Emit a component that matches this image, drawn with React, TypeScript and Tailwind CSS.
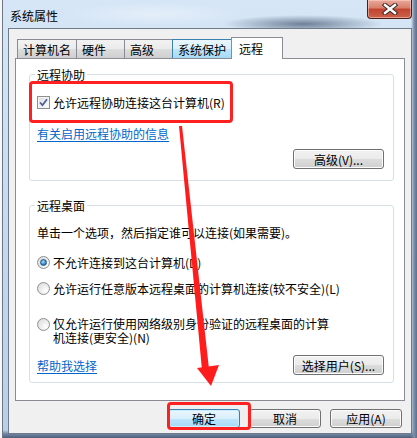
import React from 'react';

const btnGray =
  'bg-[linear-gradient(180deg,#f2f2f2_0%,#ebebeb_50%,#dddddd_50%,#cfcfcf_100%)] border-[#707070] shadow-[inset_0_0_0_1px_#fbfbfb]';
const btnBlue =
  'bg-[linear-gradient(180deg,#eaf6fd_0%,#d9f0fc_50%,#bee6fd_50%,#a7d9f5_100%)] border-[#3c7fb1] shadow-[inset_0_0_0_1px_#cdeefc]';

const Win7Button: React.FC<{ label: string; width: string; isDefault?: boolean; height?: string }> = ({
  label,
  width,
  isDefault,
  height = 'h-[20px]',
}) => (
  <button
    type="button"
    className={`${width} ${height} rounded-[3px] border flex items-center justify-center text-[12px] leading-[13px] ${
      isDefault ? btnBlue : btnGray
    }`}
  >
    {label}
  </button>
);

const Checkbox: React.FC = () => (
  <span className="w-[13px] h-[13px] shrink-0 border border-[#8e8f8f] bg-[linear-gradient(135deg,#dcdcdc,#ffffff)] flex items-center justify-center shadow-[inset_0_0_0_1px_#f4f4f4]">
    <svg width="9" height="9" viewBox="0 0 9 9">
      <path d="M1 4.5 L3.5 7.2 L8 1.2" fill="none" stroke="#4a5f97" strokeWidth="1.8" />
    </svg>
  </span>
);

const Radio: React.FC<{ checked?: boolean }> = ({ checked }) => (
  <span className="w-[13px] h-[13px] shrink-0 rounded-full border border-[#8e8f8f] bg-[radial-gradient(circle_at_70%_70%,#ffffff,#d6d6d6)] flex items-center justify-center">
    {checked && (
      <span className="w-[7px] h-[7px] rounded-full border border-[#1c5180] bg-[radial-gradient(circle_at_40%_35%,#a9dbf6,#2a7ac4_70%,#1a4f8a)]" />
    )}
  </span>
);

const GroupBox: React.FC<{ title: string; className: string; children: React.ReactNode }> = ({
  title,
  className,
  children,
}) => (
  <div className={`relative border border-[#d5dfe5] rounded-[3px] ${className}`}>
    <span className="absolute left-[5px] -top-[7px] bg-white px-[2px] leading-[13px]">{title}</span>
    {children}
  </div>
);

const Tab: React.FC<{ label: string; width: string; variant?: 'normal' | 'hover' | 'active'; first?: boolean }> = ({
  label,
  width,
  variant = 'normal',
  first,
}) => {
  const base = `${width} ${first ? '' : '-ml-px'} flex items-center border leading-[13px]`;
  if (variant === 'active') {
    return (
      <div className={`${base} h-[22px] pl-[7px] bg-white border-[#898c95] border-b-0 relative z-10`}>
        {label}
      </div>
    );
  }
  if (variant === 'hover') {
    return (
      <div
        className={`${base} h-[20px] pl-[5px] border-[#3c7fb1] bg-[linear-gradient(180deg,#eaf6fd_0%,#d9f0fc_50%,#bee6fd_50%,#a7d9f5_100%)]`}
      >
        {label}
      </div>
    );
  }
  return (
    <div
      className={`${base} h-[20px] pl-[5px] border-[#898c95] bg-[linear-gradient(180deg,#f2f2f2_0%,#ebebeb_50%,#dddddd_50%,#cfcfcf_100%)]`}
    >
      {label}
    </div>
  );
};

export default function App() {
  return (
    <div className="relative w-[417px] h-[438px] overflow-hidden flex bg-[#f7f7f7] text-black text-[12px] leading-[13px] font-['Noto_Sans_CJK_SC','Noto_Sans',sans-serif]">
      {/* outside strip */}
      <div className="w-[2px] shrink-0" />

      {/* window */}
      <div className="flex-1 flex flex-col border-l border-[#6d7684] bg-[linear-gradient(90deg,transparent_408px,#7d8ea8_411px,#55647d_415px),linear-gradient(180deg,#d6e6f6_0px,#c0d6ee_300px,#b9cfe8_430px,#6f84a3_434px,#4e5e78_438px)]">
        {/* title bar */}
        <div className="h-[28px] shrink-0 flex items-start bg-[radial-gradient(ellipse_80px_9px_at_300px_24px,#6f8097,transparent),radial-gradient(ellipse_90px_12px_at_150px_14px,#e4eefa,transparent)]">
          <span className="pl-[7px] pt-[9px] text-[12px] leading-[13px]">系统属性</span>
          <div className="ml-auto mr-[5px] w-[45px] h-[19px] rounded-b-[4px] border border-t-0 border-[#4a1d17] bg-[linear-gradient(180deg,#eaa899_0%,#d77f6c_45%,#c2432f_50%,#cb624c_100%)] shadow-[inset_0_0_0_1px_rgba(255,220,210,0.5)] flex items-center justify-center">
            <svg width="16" height="12" viewBox="0 0 16 12">
              <path d="M3 2 L13 10 M13 2 L3 10" stroke="#3a2a28" strokeWidth="4.4" strokeLinecap="square" />
              <path d="M3 2 L13 10 M13 2 L3 10" stroke="#ffffff" strokeWidth="2.4" strokeLinecap="square" />
            </svg>
          </div>
        </div>

        {/* client area */}
        <div className="flex-1 ml-[5px] mr-[5px] mb-[4px] border border-[#6f7b8a] bg-[#f0f0f0] pl-[6px] pr-[6px] pt-[8px] flex flex-col">
          {/* tabs */}
          <div className="h-[22px] -mb-px pl-[2px] flex items-end">
            <Tab label="计算机名" width="w-[60px]" first />
            <Tab label="硬件" width="w-[49px]" />
            <Tab label="高级" width="w-[49px]" />
            <Tab label="系统保护" width="w-[60px]" variant="hover" />
            <Tab label="远程" width="w-[52px]" variant="active" />
          </div>

          {/* panel */}
          <div className="h-[343px] border border-[#898c95] bg-white pl-[13px] pr-[10px] pt-[15px] flex flex-col">
            <GroupBox title="远程协助" className="h-[107px] flex flex-col pl-[7px] pr-[9px] pt-[21px]">
              <div className="flex items-center gap-[3px] h-[13px]">
                <Checkbox />
                <span>允许远程协助连接这台计算机(R)</span>
              </div>
              <a className="mt-[18px] self-start text-[#0066cc] underline underline-offset-2">有关启用远程协助的信息</a>
              <div className="mt-[9px] self-end">
                <Win7Button label="高级(V)..." width="w-[91px]" />
              </div>
            </GroupBox>

            <GroupBox title="远程桌面" className="mt-[24px] h-[178px] flex flex-col pl-[7px] pr-[9px] pt-[20px]">
              <p>单击一个选项，然后指定谁可以连接(如果需要)。</p>
              <div className="mt-[17px] flex items-center gap-[3px] h-[13px]">
                <Radio checked />
                <span>不允许连接到这台计算机(D)</span>
              </div>
              <div className="mt-[13px] flex items-center gap-[3px] h-[13px]">
                <Radio />
                <span>允许运行任意版本远程桌面的计算机连接(较不安全)(L)</span>
              </div>
              <div className="mt-[22px] flex items-start gap-[3px]">
                <span className="mt-px">
                  <Radio />
                </span>
                <span className="leading-[14px]">
                  仅允许运行使用网络级别身份验证的远程桌面的计算
                  <br />
                  机连接(更安全)(N)
                </span>
              </div>
              <div className="mt-[10px] flex items-center justify-between">
                <a className="text-[#0066cc] underline underline-offset-2">帮助我选择</a>
                <Win7Button label="选择用户(S)..." width="w-[91px]" />
              </div>
            </GroupBox>
          </div>

          {/* dialog buttons */}
          <div className="pt-[8px] pr-[3px] flex justify-end gap-[9px]">
            <Win7Button label="确定" width="w-[72px]" height="h-[19px]" isDefault />
            <Win7Button label="取消" width="w-[72px]" height="h-[19px]" />
            <Win7Button label="应用(A)" width="w-[72px]" height="h-[19px]" />
          </div>
        </div>
      </div>

      {/* annotations */}
      <div className="absolute left-[29px] top-[81px] w-[204px] h-[42px] border-[3px] border-[#ff2020] rounded-[4px] pointer-events-none" />
      <div className="absolute left-[167px] top-[402px] w-[84px] h-[28px] border-[3px] border-[#ff2020] rounded-[4px] pointer-events-none" />
      <svg className="absolute inset-0 pointer-events-none" width="417" height="438" viewBox="0 0 417 438">
        <polygon points="179,126 182,126 209,369 202,370" fill="#ff1c1c" />
        <polygon points="197,368 219,365 211,386" fill="#ff1c1c" />
      </svg>
    </div>
  );
}
